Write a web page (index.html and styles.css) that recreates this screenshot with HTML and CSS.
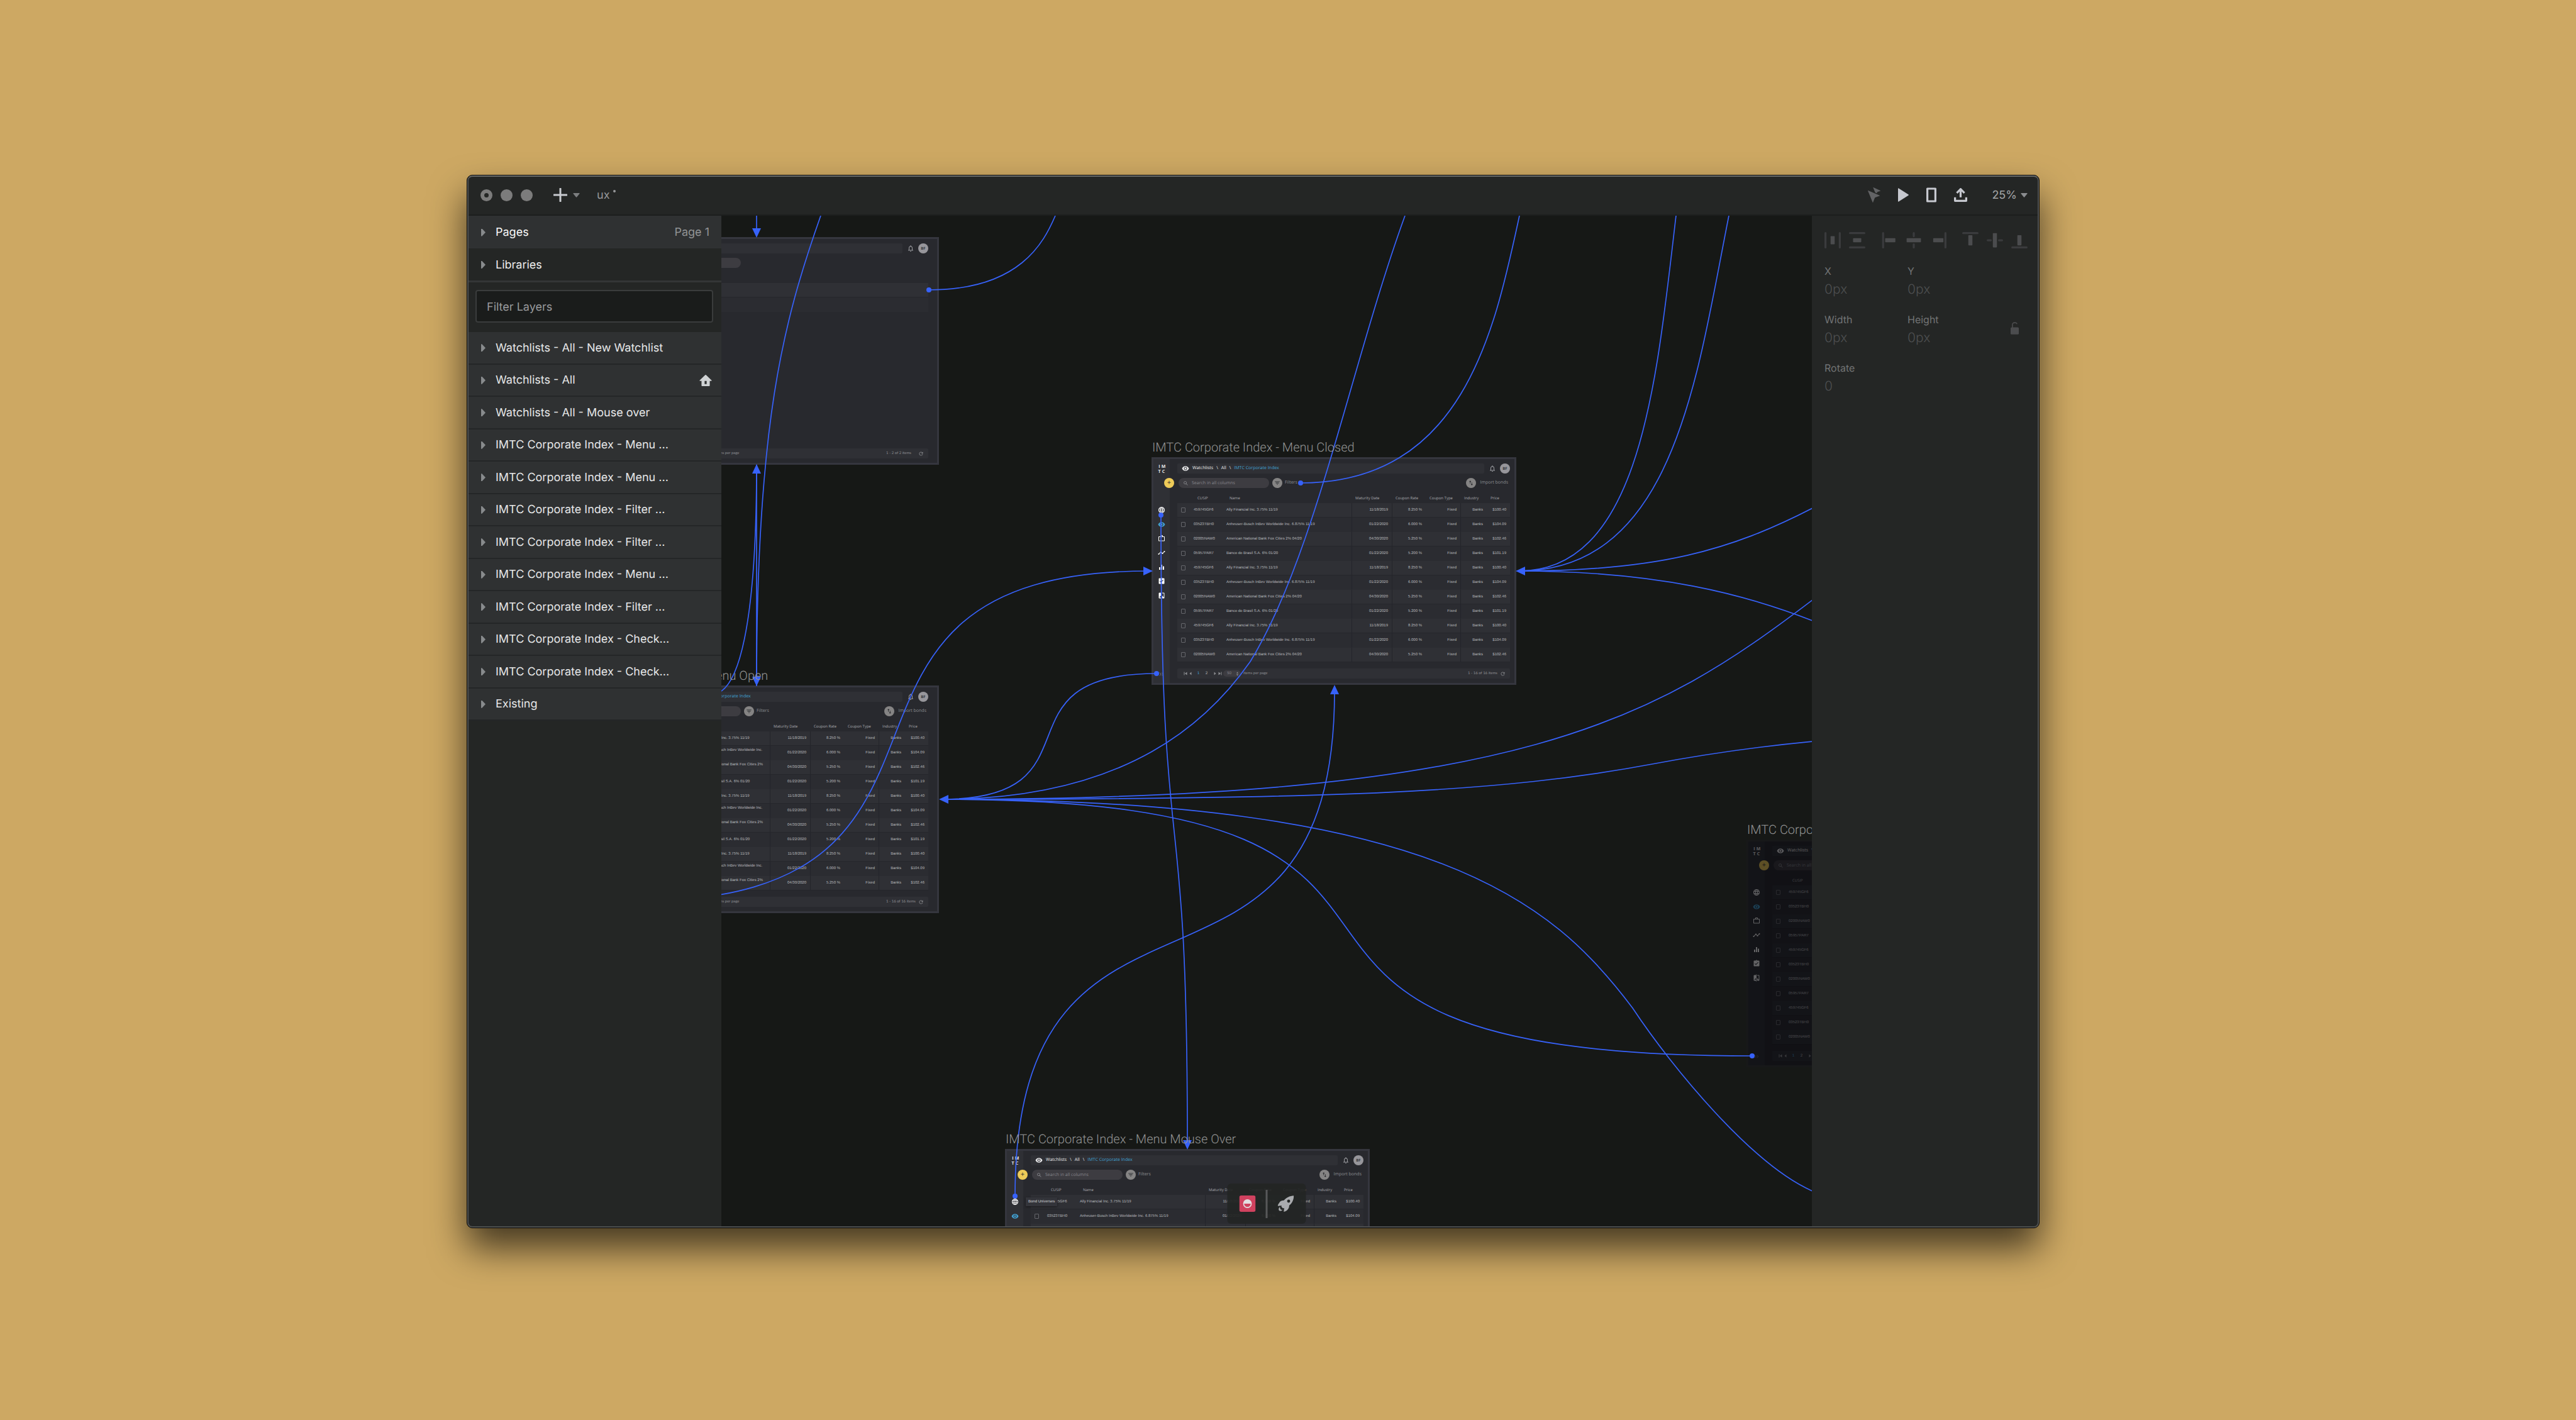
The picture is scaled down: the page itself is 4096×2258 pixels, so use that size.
FILE: index.html
```html
<!DOCTYPE html>
<html lang="en">
<head>
<meta charset="utf-8">
<meta name="viewport" content="width=device-width, initial-scale=1">
<title>ux</title>
<link rel="stylesheet" href="styles.css">
</head>
<body>
<svg class="sprite" aria-hidden="true">
  <symbol id="i-globe" viewBox="0 0 24 24"><path d="M11.99 2C6.47 2 2 6.48 2 12s4.47 10 9.99 10C17.52 22 22 17.52 22 12S17.52 2 11.99 2zm6.93 6h-2.95c-.32-1.25-.78-2.45-1.38-3.56 1.84.63 3.37 1.91 4.33 3.56zM12 4.04c.83 1.2 1.48 2.53 1.91 3.96h-3.82c.43-1.43 1.08-2.76 1.91-3.96zM4.26 14C4.1 13.36 4 12.69 4 12s.1-1.36.26-2h3.38c-.08.66-.14 1.32-.14 2 0 .68.06 1.34.14 2H4.26zm.82 2h2.95c.32 1.25.78 2.45 1.38 3.56-1.84-.63-3.37-1.9-4.33-3.56zm2.95-8H5.08c.96-1.66 2.49-2.93 4.33-3.56C8.81 5.55 8.35 6.75 8.03 8zM12 19.96c-.83-1.2-1.48-2.53-1.91-3.96h3.82c-.43 1.43-1.08 2.76-1.91 3.96zM14.34 14H9.66c-.09-.66-.16-1.32-.16-2 0-.68.07-1.35.16-2h4.68c.09.65.16 1.32.16 2 0 .68-.07 1.34-.16 2zm.25 5.56c.6-1.11 1.06-2.31 1.38-3.56h2.95c-.96 1.65-2.49 2.93-4.33 3.56zM16.36 14c.08-.66.14-1.32.14-2 0-.68-.06-1.34-.14-2h3.38c.16.64.26 1.31.26 2s-.1 1.36-.26 2h-3.38z"/></symbol>
  <symbol id="i-eye" viewBox="0 0 24 24"><path d="M12 4.5C7 4.5 2.73 7.61 1 12c1.73 4.39 6 7.5 11 7.5s9.27-3.11 11-7.5c-1.73-4.39-6-7.5-11-7.5zM12 17c-2.76 0-5-2.24-5-5s2.24-5 5-5 5 2.24 5 5-2.24 5-5 5zm0-8c-1.66 0-3 1.34-3 3s1.34 3 3 3 3-1.34 3-3-1.34-3-3-3z"/></symbol>
  <symbol id="i-work" viewBox="0 0 24 24"><path d="M14 6V4h-4v2h4zM4 8v11h16V8H4zm16-2c1.11 0 2 .89 2 2v11c0 1.11-.89 2-2 2H4c-1.11 0-2-.89-2-2l.01-11c0-1.11.88-2 1.99-2h4V4c0-1.11.89-2 2-2h4c1.11 0 2 .89 2 2v2h4z"/></symbol>
  <symbol id="i-timeline" viewBox="0 0 24 24"><path d="M23 8c0 1.1-.9 2-2 2-.18 0-.35-.02-.51-.07l-3.56 3.55c.05.16.07.34.07.52 0 1.1-.9 2-2 2s-2-.9-2-2c0-.18.02-.36.07-.52l-2.55-2.55c-.16.05-.34.07-.52.07s-.36-.02-.52-.07l-4.55 4.56c.05.16.07.33.07.51 0 1.1-.9 2-2 2s-2-.9-2-2 .9-2 2-2c.18 0 .35.02.51.07l4.56-4.55C8.02 9.36 8 9.18 8 9c0-1.1.9-2 2-2s2 .9 2 2c0 .18-.02.36-.07.52l2.55 2.55c.16-.05.34-.07.52-.07s.36.02.52.07l3.55-3.56C19.02 8.35 19 8.18 19 8c0-1.1.9-2 2-2s2 .9 2 2z"/></symbol>
  <symbol id="i-bars" viewBox="0 0 24 24"><path d="M10 20h4V4h-4v16zm-6 0h4v-8H4v8zM16 9v11h4V9h-4z"/></symbol>
  <symbol id="i-task" viewBox="0 0 24 24"><path d="M19 3h-4.180C14.400 1.840 13.300 1 12 1c-1.300 0-2.400.84-2.820 2H5c-1.100 0-2 .9-2 2v14c0 1.100.9 2 2 2h14c1.100 0 2-.9 2-2V5c0-1.100-.9-2-2-2zm-7 0c.55 0 1 .45 1 1s-.45 1-1 1-1-.45-1-1 .45-1 1-1zm-2 14l-4-4 1.410-1.410L10 14.170l6.590-6.590L18 9l-8 8z"/></symbol>
  <symbol id="i-compare" viewBox="0 0 24 24"><path d="M10 3H5c-1.100 0-2 .9-2 2v14c0 1.100.9 2 2 2h5v2h2V1h-2v2zm0 15H5l5-6v6zm9-15h-5v2h5v13l-5-6v9h5c1.100 0 2-.9 2-2V5c0-1.100-.9-2-2-2z"/></symbol>
  <symbol id="i-bell" viewBox="0 0 24 24"><path d="M12 22c1.100 0 2-.9 2-2h-4c0 1.100.9 2 2 2zm6-6v-5c0-3.070-1.630-5.640-4.500-6.320V4c0-.83-.67-1.500-1.500-1.500s-1.500.67-1.500 1.500v.68C7.640 5.360 6 7.920 6 11v5l-2 2v1h16v-1l-2-2zm-2 1H8v-6c0-2.480 1.510-4.500 4-4.500s4 2.020 4 4.500v6z"/></symbol>
  <symbol id="i-search" viewBox="0 0 24 24"><path d="M15.500 14h-.79l-.28-.27C15.410 12.590 16 11.110 16 9.500 16 5.910 13.090 3 9.500 3S3 5.910 3 9.500 5.910 16 9.500 16c1.610 0 3.090-.59 4.230-1.570l.27.28v.79l5 4.990L20.490 19l-4.990-5zm-6 0C7.010 14 5 11.990 5 9.500S7.010 5 9.500 5 14 7.010 14 9.500 11.990 14 9.500 14z"/></symbol>
  <symbol id="i-filter" viewBox="0 0 24 24"><path d="M10 18h4v-2h-4v2zM3 6v2h18V6H3zm3 7h12v-2H6v2z"/></symbol>
  <symbol id="i-swap" viewBox="0 0 24 24"><path d="M16 17.010V10h-2v7.010h-3L15 21l4-3.990h-3zM9 3L5 6.990h3V14h2V6.990h3L9 3z"/></symbol>
  <symbol id="i-refresh" viewBox="0 0 24 24"><path d="M17.650 6.350C16.200 4.900 14.210 4 12 4c-4.420 0-7.990 3.580-7.990 8s3.570 8 7.990 8c3.730 0 6.840-2.550 7.730-6h-2.080c-.82 2.330-3.040 4-5.650 4-3.310 0-6-2.690-6-6s2.690-6 6-6c1.660 0 3.140.69 4.220 1.780L13 11h7V4l-2.350 2.350z"/></symbol>
  <symbol id="i-expand" viewBox="0 0 24 24"><path d="M3 5l7 7-7 7M13 5l7 7-7 7" fill="none" stroke="currentColor" stroke-width="2.4"/></symbol>
  <symbol id="i-first" viewBox="0 0 12 12"><path d="M1 1h2v10H1zM11 1v10L4 6z"/></symbol>
  <symbol id="i-prev" viewBox="0 0 12 12"><path d="M9 1v10L3 6z"/></symbol>
  <symbol id="i-next" viewBox="0 0 12 12"><path d="M3 1v10l6-5z"/></symbol>
  <symbol id="i-last" viewBox="0 0 12 12"><path d="M9 1h2v10H9zM1 1v10l7-5z"/></symbol>
  <symbol id="i-updown" viewBox="0 0 12 16"><path d="M2 6l4-5 4 5zM2 10l4 5 4-5z"/></symbol>
</svg>

<div class="app">
  <header class="titlebar">
    <div class="lights">
      <button class="light light--close" aria-label="Close"></button>
      <button class="light" aria-label="Minimize"></button>
      <button class="light" aria-label="Zoom"></button>
    </div>
    <button class="insert" aria-label="Insert">
      <svg width="22" height="22" viewBox="0 0 22 22"><path d="M11 1v20M1 11h20" stroke="#c8cacf" stroke-width="3" stroke-linecap="round"/></svg>
      <svg width="11" height="7" viewBox="0 0 11 7"><path d="M1 0h9q1 0 .5 1L6 6.500q-.5.5-1 0L.5 1Q0 0 1 0z" fill="#7c7e80"/></svg>
    </button>
    <div class="doc-name">ux<span class="doc-name__dot"></span></div>
    <div class="tools">
      <button class="tool" aria-label="Live cursor">
        <svg width="20" height="24" viewBox="0 0 25 30"><path d="M0 6.500Q0 6 .7 6.300L23.300 16q.7.500 0 .8l-8.600 3.200q-.7.300-.9 1L10.300 29.600q-.4.700-.8 0z" fill="#626365"/><path d="M10.500.4Q10.400-.2 11 .1L24.600 6.400q.8.500 0 .8L19.500 8.800q-.8.200-.9 1l-.8 1.800-3.200-1.300z" fill="#626365"/></svg>
      </button>
      <button class="tool" aria-label="Preview">
        <svg width="17" height="22" viewBox="0 0 21 27"><path d="M0 1.200Q0-.3 1.300.5L20.300 12.700q1 .8 0 1.600L1.300 26.500Q0 27.300 0 25.800z" fill="#c6c8cf"/></svg>
      </button>
      <button class="tool" aria-label="Device">
        <svg width="16" height="24" viewBox="0 0 20 30"><rect x="2" y="2.500" width="16" height="25" fill="none" stroke="#c6c8cf" stroke-width="4" stroke-linejoin="round"/></svg>
      </button>
      <button class="tool" aria-label="Share">
        <svg width="21" height="22" viewBox="0 0 26 27"><path d="M13 18V3M5.500 9.500L13 2l7.500 7.500" fill="none" stroke="#c6c8cf" stroke-width="4"/><path d="M2 18v7h22v-7" fill="none" stroke="#c6c8cf" stroke-width="4" stroke-linejoin="round"/></svg>
      </button>
      <button class="zoom">25%
        <svg width="11" height="7" viewBox="0 0 11 7"><path d="M1 0h9q1 0 .5 1L6 6.500q-.5.5-1 0L.5 1Q0 0 1 0z" fill="#8a8c8f"/></svg>
      </button>
    </div>
  </header>

  <div class="workspace">
    <aside class="layers">
      <div class="section section--pages"><i class="caret"></i>Pages<span class="section__note">Page 1</span></div>
      <div class="section"><i class="caret"></i>Libraries</div>
      <div class="filter"><input class="filter__input" type="text" placeholder="Filter Layers" aria-label="Filter Layers"></div>
      <ul class="layer-list">
        <li class="layer"><i class="caret"></i>Watchlists - All - New Watchlist</li>
        <li class="layer"><i class="caret"></i>Watchlists - All
          <svg class="layer__home" width="20" height="18" viewBox="0 0 24 22"><path d="M11.200.4q.8-.7 1.600 0L23.600 10.800q.6.900-.5 1.100H20v9q0 1.100-1.100 1.100H5.100Q4 22 4 20.900v-9H.9q-1.100-.2-.5-1.100zM10 12v6h4v-6z" fill="#cfd2d4" fill-rule="evenodd"/></svg>
        </li>
        <li class="layer"><i class="caret"></i>Watchlists - All - Mouse over</li>
        <li class="layer"><i class="caret"></i>IMTC Corporate Index - Menu ...</li>
        <li class="layer"><i class="caret"></i>IMTC Corporate Index - Menu ...</li>
        <li class="layer"><i class="caret"></i>IMTC Corporate Index - Filter ...</li>
        <li class="layer"><i class="caret"></i>IMTC Corporate Index - Filter ...</li>
        <li class="layer"><i class="caret"></i>IMTC Corporate Index - Menu ...</li>
        <li class="layer"><i class="caret"></i>IMTC Corporate Index - Filter ...</li>
        <li class="layer"><i class="caret"></i>IMTC Corporate Index - Check...</li>
        <li class="layer"><i class="caret"></i>IMTC Corporate Index - Check...</li>
        <li class="layer"><i class="caret"></i>Existing</li>
      </ul>
    </aside>

    <main class="canvas">
      <div id="artboards"></div>
      <svg class="links" aria-hidden="true">
        <defs>
          <path id="tip" d="M0 0L-7 -15H7z"/>
        </defs>
        <g class="links__lines">
          <path d="M56 0V24M56 406V738"/>
          <path d="M56 396C56 640 30 735 0 756"/>
          <path d="M56 748C56 330 98 170 158 0"/>
          <path d="M330 118C475 118 513 42 531 0"/>
          <path d="M350 928C650 928 778 799 841 709C945 539 1000 240 1087 0"/>
          <path d="M921 425C1181 425 1230 180 1269 0"/>
          <path d="M680 565C75 565 477 1090 -134 1090"/>
          <path d="M692 728C426 728 612 928 350 928"/>
          <path d="M1268 565C1463 565 1487 260 1518 0"/>
          <path d="M1268 565C1517 565 1552 250 1602 0"/>
          <path d="M1268 565C1489 565 1605 532 1735 465"/>
          <path d="M1268 565C1491 565 1630 603 1735 644"/>
          <path d="M975 756C975 1332 467 973 467 1559"/>
          <path d="M699 476C699 1085 741 876 741 1474"/>
          <path d="M350 928C1274 928 1485 801 1735 611"/>
          <path d="M350 928C978 928 1240 917 1480 872C1560 857 1640 845 1735 836"/>
          <path d="M350 928C1345 928 641 1336 1640 1336"/>
          <path d="M350 928C1133 928 1322 1090 1449 1260C1512 1355 1640 1510 1735 1551"/>
        </g>
        <g class="links__ends">
          <use href="#tip" transform="translate(56 35)"/>
          <use href="#tip" transform="translate(56 395) rotate(180)"/>
          <use href="#tip" transform="translate(56 748)"/>
          <use href="#tip" transform="translate(686 565) rotate(-90)"/>
          <use href="#tip" transform="translate(1263 565) rotate(90)"/>
          <use href="#tip" transform="translate(975 746) rotate(180)"/>
          <use href="#tip" transform="translate(346 928) rotate(90)"/>
          <use href="#tip" transform="translate(741 1485)"/>
          <circle cx="330" cy="118" r="4"/>
          <circle cx="921" cy="425" r="4"/>
          <circle cx="699" cy="476" r="4"/>
          <circle cx="692" cy="728" r="4"/>
          <circle cx="467" cy="1559" r="4"/>
          <circle cx="1639" cy="1336" r="4"/>
        </g>
      </svg>
      <div class="dock">
        <button class="dock__btn" aria-label="Components">
          <svg width="26" height="26" viewBox="0 0 32 32"><rect width="32" height="32" rx="4" fill="#d0425f"/><circle cx="16" cy="16" r="8.500" fill="#e3dfe1"/><path d="M9.500 16h13a6.500 6.500 0 0 1-13 0z" fill="#d0425f"/></svg>
        </button>
        <span class="dock__rule"></span>
        <button class="dock__btn" aria-label="Launch">
          <svg width="26" height="26" viewBox="0 0 32 32"><path d="M31.600.2C24 .6 17 3.800 12.300 9.600 9 9.700 5.600 10.600 3.200 14 1.800 16 .6 18.400.2 20.500L8 19.800c-.5.800-.7 1.600-.6 2.400L10.300 25c.8 0 1.700-.3 2.500-.8L12 32c2.400-.7 4.800-1.900 6.700-3.500 3-2.600 4-5.600 4-9C28.400 15 31.700 8.400 31.600.2zM21.500 14a3 3 0 1 1 .1-6 3 3 0 0 1-.1 6z" fill="#a9abae"/><path d="M4.600 22.600C1.800 24 1.600 28 3 29.600c2 1.300 5.600.8 6.600-1.900-1.200.4-2.600.6-3.600-.4-1-1.200-1.400-2.600-1.400-4.700z" fill="#a9abae"/></svg>
        </button>
      </div>
    </main>

    <aside class="inspector">
      <div class="align">
        <div class="align__group">
          <button class="align__btn" aria-label="Distribute horizontally"><svg viewBox="0 0 32 32"><path class="guide" d="M2 2v28M30 2v28"/><rect x="12" y="8" width="8" height="16" rx="1"/></svg></button>
          <button class="align__btn" aria-label="Distribute vertically"><svg viewBox="0 0 32 32"><path class="guide" d="M2 2h28M2 30h28"/><rect x="8" y="12" width="16" height="8" rx="1"/></svg></button>
        </div>
        <div class="align__group">
          <button class="align__btn" aria-label="Align left"><svg viewBox="0 0 32 32"><path class="guide" d="M4 2v28"/><rect x="8" y="12" width="20" height="8" rx="1"/></svg></button>
          <button class="align__btn" aria-label="Align center"><svg viewBox="0 0 32 32"><path class="guide" d="M16 2v6M16 24v6"/><rect x="2" y="12" width="28" height="8" rx="1"/></svg></button>
          <button class="align__btn" aria-label="Align right"><svg viewBox="0 0 32 32"><path class="guide" d="M30 2v28"/><rect x="6" y="12" width="20" height="8" rx="1"/></svg></button>
        </div>
        <div class="align__group">
          <button class="align__btn" aria-label="Align top"><svg viewBox="0 0 32 32"><path class="guide" d="M2 2h28"/><rect x="12" y="6" width="8" height="20" rx="1"/></svg></button>
          <button class="align__btn" aria-label="Align middle"><svg viewBox="0 0 32 32"><path class="guide" d="M2 16h6M24 16h6"/><rect x="12" y="2" width="8" height="28" rx="1"/></svg></button>
          <button class="align__btn" aria-label="Align bottom"><svg viewBox="0 0 32 32"><path class="guide" d="M2 30h28"/><rect x="12" y="6" width="8" height="20" rx="1"/></svg></button>
        </div>
      </div>
      <form class="fields">
        <div class="field"><label for="x">X</label><input id="x" value="0px"></div>
        <div class="field"><label for="y">Y</label><input id="y" value="0px"></div>
        <div class="field field--first"><label for="w">Width</label><input id="w" value="0px"></div>
        <div class="field"><label for="h">Height</label><input id="h" value="0px"></div>
        <button class="lock" type="button" aria-label="Lock ratio"><svg width="13" height="20" viewBox="0 0 16 24"><path d="M3.500 11V5a4 4 0 0 1 4-4h1.500a4 4 0 0 1 3.600 2.600" fill="none" stroke="#4b4c4e" stroke-width="2"/><rect y="10" width="16" height="14" rx="2" fill="#4b4c4e"/></svg></button>
        <div class="field field--first"><label for="r">Rotate</label><input id="r" value="0"></div>
      </form>
    </aside>
  </div>
</div>
<script src="artboards.js"></script>
</body>
</html>
```
FILE: styles.css
```css
* { box-sizing: border-box; }

body {
  margin: 0;
  min-height: 100vh;
  display: flex;
  padding: 278px 853px 305px 742px;
  background: #cda863;
  color: #e6e7e8;
  font-family: Inter, "Liberation Sans", sans-serif;
  font-size: 18px;
  text-rendering: geometricPrecision;
}

button, input, select {
  margin: 0;
  padding: 0;
  border: 0;
  background: none;
  color: inherit;
  font: inherit;
  text-rendering: inherit;
}

button { display: flex; align-items: center; justify-content: center; }
svg { display: block; }
.sprite { position: absolute; width: 0; height: 0; }

/* window */
.app {
  position: relative;
  flex: 1;
  min-width: 0;
  display: flex;
  flex-direction: column;
  overflow: hidden;
  border: 1px solid #060606;
  border-radius: 9px;
  background: #242625;
  box-shadow: 0 32px 57px rgba(0, 0, 0, .66);
}
.app::after {
  content: "";
  position: absolute;
  inset: 0;
  z-index: 10;
  border: 2px solid #4f5151;
  border-top-color: #686a6a;
  border-radius: 8px;
  pointer-events: none;
}

/* title bar */
.titlebar {
  display: flex;
  align-items: center;
  height: 64px;
  padding: 0 18px 0 21px;
  border-bottom: 2px solid #1c1e1d;
}
.lights { display: flex; gap: 13px; }
.light { width: 19px; height: 19px; border-radius: 50%; background: #7c7c7c; }
.light--close::after { content: ""; width: 7px; height: 7px; border-radius: 50%; background: #242625; }
.insert { gap: 9px; margin-left: 33px; }
.doc-name { display: flex; margin-left: 27px; color: #96989a; }
.doc-name__dot { width: 4px; height: 4px; margin: 2px 0 0 6px; border-radius: 50%; background: #96989a; }
.tools { display: flex; align-items: center; gap: 28px; margin-left: auto; }
.zoom { gap: 6px; margin-left: 11px; color: #a3a5a7; }

.workspace { flex: 1; display: flex; min-height: 0; }

/* layers */
.layers { flex: none; width: 404px; background: #242625; }
.section, .layer {
  display: flex;
  align-items: center;
  padding: 1px 17px 0 22px;
}
.section { height: 51px; color: #ededee; }
.section--pages { height: 52px; background: #2f3132; color: #f8f8f8; }
.section__note { margin-left: auto; padding-right: 2px; color: #929496; }
.caret {
  flex: none;
  width: 7px;
  height: 12px;
  margin-right: 16px;
  background: #888b8d;
  clip-path: polygon(0 0, 20% 0, 100% 50%, 20% 100%, 0 100%);
}
.filter { padding: 12px 13px 15px; border-top: 3px solid #343636; }
.filter__input {
  display: block;
  width: 100%;
  height: 52px;
  padding: 2px 16px 0;
  border: 2px solid #3a3c3c;
  border-radius: 4px;
  background: #1a1c1b;
}
.filter__input::placeholder { color: #98999b; opacity: 1; }
.layer-list {
  display: grid;
  grid-auto-rows: 1fr;
  height: 618px;
  margin: 0;
  padding: 0;
  list-style: none;
}
.layer { background: #2f3132; border-bottom: 2px solid #242627; }
.layer__home { margin-left: auto; margin-right: -2px; }

/* canvas */
.canvas { position: relative; flex: 1; min-width: 0; overflow: hidden; background: #161816; }
.links { position: absolute; inset: 0; z-index: 2; width: 100%; height: 100%; pointer-events: none; }
.links__lines { fill: none; stroke: #3762fa; stroke-width: 1.7; }
.links__ends { fill: #3762fa; }

.artboard { position: absolute; width: 580px; height: 362px; font-family: "Open Sans", "Liberation Sans", sans-serif; }
.artboard__title {
  position: absolute;
  z-index: 3;
  left: 1px;
  bottom: 100%;
  margin: 0;
  padding-bottom: 4px;
  color: #929393;
  font: 300 20px/24px Roboto, "Liberation Sans", sans-serif;
  white-space: nowrap;
}
.screen {
  position: relative;
  display: flex;
  height: 100%;
  border: 3px solid #35363e;
  background: #28292e;
  color: #9a9b9f;
  font-size: 7px;
  line-height: 10px;
}
.screen svg { fill: currentColor; }
.menu {
  flex: none;
  display: flex;
  flex-direction: column;
  align-items: center;
  width: 26px;
  padding: 9px 0 10px;
  background: #2f3035;
  color: #fff;
}
.menu__logo {
  display: grid;
  grid-template-columns: 5px 6px;
  gap: 0 1px;
  justify-items: center;
  line-height: 8px;
  font-weight: 700;
  color: #e8e8ea;
}
.menu__items { display: flex; flex-direction: column; justify-content: space-between; height: 148px; margin-top: 50px; }
.menu__items svg { width: 12px; height: 12px; }
.menu__items .on { color: #41a1d3; }
.menu__more { margin-top: auto; width: 8px; height: 8px; color: #8d8e92; }
.add {
  position: absolute;
  left: 17px;
  top: 30px;
  width: 16px;
  height: 16px;
  border-radius: 50%;
  background: #eecb58;
  color: #28292e;
  font-size: 11px;
}
.page { flex: 1; min-width: 0; display: flex; flex-direction: column; padding: 7px 7px 7px 12px; }
.bar { display: flex; align-items: center; gap: 8px; height: 16px; }
.crumbs {
  flex: 1;
  display: flex;
  align-items: center;
  gap: 5px;
  height: 16px;
  padding-left: 7px;
  border-radius: 2px;
  background: #2f3035;
  color: #e8e8ea;
}
.crumbs svg { width: 12px; height: 12px; }
.crumbs a { color: #41a1d3; text-decoration: none; }
.bell { width: 9px; height: 12px; }
.bell svg { width: 12px; height: 12px; flex: none; }
.avatar { width: 16px; height: 16px; border-radius: 50%; background: #97969b; color: #35363b; font-size: 6px; font-weight: 700; }
.actions { display: flex; align-items: center; height: 16px; margin: 7px 3px 0 2px; color: #8d8e92; }
.find { display: flex; align-items: center; gap: 5px; width: 144px; height: 16px; padding-left: 7px; border-radius: 8px; background: #3d3c41; }
.find svg { width: 9px; height: 9px; }
.find input { width: 110px; height: 12px; }
.find input::placeholder { color: #85858a; opacity: 1; }
.round { display: grid; place-items: center; width: 16px; height: 16px; border-radius: 50%; background: #858484; color: #1f2024; }
.round svg { width: 10px; height: 10px; }
.actions button { gap: 4px; margin-left: 5px; }
.actions .import { gap: 6px; margin-left: auto; }
.grid { width: 100%; margin-top: 8px; border-collapse: separate; border-spacing: 0; table-layout: fixed; font-size: 6px; line-height: 8px; }
.grid th { height: 16px; padding: 0 0 0 6px; text-align: left; font-weight: 400; color: #a9aaae; white-space: nowrap; }
.grid th:nth-child(3) { padding-left: 5px; }
.grid td { height: 23px; padding: 0 6px 0 0; text-align: right; color: #b9babd; border-bottom: 1px solid; font-family: "Liberation Sans", sans-serif; white-space: nowrap; }
.grid tr:nth-child(odd) td { background: #2f3035; border-bottom-color: #25262b; }
.grid tr:nth-child(even) td { background: #2b2c31; border-bottom-color: #2b2c31; }
.grid td:nth-child(-n+3) { padding: 0; text-align: left; }
.grid td:nth-child(4), .grid td:nth-child(5), .grid td:nth-child(7) { border-left: 1px solid #23242a; }
.artboard--open .grid td:nth-child(3) { white-space: normal; padding-right: 4px; }
.grid input { display: block; appearance: none; width: 7px; height: 8px; margin-left: 6px; border: 1px solid #66676c; border-radius: 1px; }
.blank-rows { margin-top: 24px; }
.blank-rows div { height: 23px; background: #2b2c31; }
.blank-rows div:first-child { background: #2f3035; border-bottom: 1px solid #25262b; }
.pager { display: flex; align-items: center; height: 16px; margin-top: auto; padding: 0 7px 0 9px; border-radius: 2px; background: #2f3035; color: #8d8e92; font-family: Lato, "Liberation Sans", sans-serif; font-size: 6px; }
.pager button { width: 7px; margin-right: 1px; }
.pager svg { width: 6px; height: 6px; }
.pager a { width: 5px; margin-left: 8px; color: #b9babd; text-align: center; text-decoration: none; }
.pager a.on { margin-left: 6px; color: #41a1d3; }
.pager a + button { margin-left: 7px; }
.pager__size { display: flex; align-items: center; gap: 4px; width: 28px; height: 10px; margin: 0 4px 0 1px; padding-left: 6px; border-radius: 5px; background: #3d3c41; }
.pager__size select { appearance: none; width: 10px; height: 10px; color: #85858a; line-height: 10px; }
.pager__size svg { width: 5px; height: 7px; }
.pager__count { width: 44px; margin-left: auto; margin-right: 7px; white-space: nowrap; }
.pager .reload, .pager .reload svg { width: 9px; height: 9px; margin: 0; }

/* screens with the side menu unfolded */
.artboard--open .menu { width: 104px; align-items: flex-start; padding-left: 7px; }
.artboard--open .page { padding-right: 14px; }

/* covered by a dialog scrim */
.artboard--dim .screen { border-color: #171819; }
.artboard--dim .screen::after { content: ""; position: absolute; inset: 0; background: rgba(4, 4, 6, .62); }

.tip {
  position: absolute;
  left: 30px;
  top: 74px;
  padding: 2px 4px;
  background: #33343a;
  box-shadow: 0 1px 3px rgba(0, 0, 0, .5);
  color: #d6d6d8;
  font: 6px/10px "Liberation Sans", sans-serif;
  white-space: nowrap;
}

/* floating dock */
.dock {
  position: absolute;
  left: 50%;
  bottom: 6px;
  z-index: 4;
  display: flex;
  align-items: center;
  gap: 16px;
  height: 64px;
  padding: 0 19px;
  border-radius: 6px;
  background: rgba(35, 37, 36, .94);
  transform: translateX(-50%);
}
.dock__rule { width: 3px; height: 45px; background: #58595a; }

/* inspector */
.inspector { flex: none; width: 361px; padding: 26px 0 0 20px; background: #242625; }
.align { display: flex; gap: 25px; }
.align__group { display: flex; gap: 13px; }
.align__btn svg { width: 26px; height: 26px; fill: #4b4c4e; }
.guide { fill: none; stroke: #3a3b3d; stroke-width: 4; stroke-linecap: round; }
.fields {
  display: grid;
  grid-template-columns: 132px 132px 77px;
  gap: 21px 0;
  margin-top: 22px;
  font-size: 16px;
  line-height: 28px;
}
.field { display: flex; flex-direction: column; color: #717374; }
.field--first { grid-column: 1; }
.field input { width: 100px; height: 30px; margin-bottom: -2px; color: #4d4f50; font-size: 21px; font-weight: 300; }
.lock { align-self: center; justify-self: start; padding-left: 32px; }
```
FILE: artboards.js
```js
const icon = (name, cls = '') => `<svg class="${cls}"><use href="#i-${name}"/></svg>`;

const bonds = [
  ['459745GF6', 'Ally Financial Inc. 3.75% 11/19', '11/18/2019', '8.250 %', '$100.40'],
  ['03523TBH0', 'Anheuser-Busch InBev Worldwide Inc. 6.875% 11/19', '01/22/2020', '6.000 %', '$104.09'],
  ['02005NAW0', 'American National Bank Fox Cities 2% 04/20', '04/30/2020', '5.250 %', '$102.46'],
  ['05957PAR7', 'Banco do Brasil S.A. 6% 01/20', '01/22/2020', '5.200 %', '$101.19'],
];

const screens = [
  { x: -234, y: 34, title: 'Watchlists - All', kind: 'open', blank: true, count: '1 - 2 of 2 items' },
  { x: -234, y: 747, title: 'IMTC Corporate Index - Menu Open', kind: 'open' },
  { x: 684, y: 384, title: 'IMTC Corporate Index - Menu Closed' },
  { x: 451, y: 1484, title: 'IMTC Corporate Index - Menu Mouse Over', tip: 'Bond Universes' },
  { x: 1630, y: 992, title: 'IMTC Corporate Index - Filter', kind: 'dim' },
];

function table() {
  const rows = Array.from({ length: 11 }, (_, i) => {
    const [cusip, name, date, rate, price] = bonds[i % 4];
    return `<tr><td><input type="checkbox" aria-label="Select ${cusip}"></td><td>${cusip}</td><td>${name}</td>
      <td>${date}</td><td>${rate}</td><td>Fixed</td><td>Banks</td><td>${price}</td></tr>`;
  }).join('');
  const widths = [26, 52, 0, 64, 54, 55, 42, 37];
  const cols = widths.map(w => (w ? `<col style="width:${w}px">` : '<col>')).join('');
  return `<table class="grid"><colgroup>${cols}</colgroup>
    <thead><tr><th></th><th>CUSIP</th><th>Name</th><th>Maturity Date</th><th>Coupon Rate</th><th>Coupon Type</th><th>Industry</th><th>Price</th></tr></thead>
    <tbody>${rows}</tbody></table>`;
}

const bondActions = `
  <button><i class="round">${icon('filter')}</i>Filters</button>
  <button class="import"><i class="round">${icon('swap')}</i>Import bonds</button>`;

function screen(s) {
  const icons = ['globe', 'eye', 'work', 'timeline', 'bars', 'task', 'compare'];
  return `<section class="artboard artboard--${s.kind || 'closed'}" style="left:${s.x}px;top:${s.y}px">
    <h2 class="artboard__title">${s.title}</h2>
    <div class="screen">
      <nav class="menu">
        <div class="menu__logo"><span>I</span><span>M</span><span>T</span><span>C</span></div>
        <div class="menu__items">${icons.map(n => icon(n, n === 'eye' ? 'on' : '')).join('')}</div>
        ${icon('expand', 'menu__more')}
      </nav>
      <div class="page">
        <div class="bar">
          <div class="crumbs">${icon('eye')}<span>Watchlists</span><span>\\</span><span>All</span>
            ${s.blank ? '' : '<span>\\</span><a href="#">IMTC Corporate Index</a>'}</div>
          <button class="bell" aria-label="Notifications">${icon('bell')}</button>
          <button class="avatar">BF</button>
        </div>
        <div class="actions">
          <label class="find">${icon('search')}<input type="text" placeholder="Search in all columns" aria-label="Search in all columns"></label>
          ${s.blank ? '' : bondActions}
        </div>
        ${s.blank ? '<div class="blank-rows"><div></div><div></div></div>' : table()}
        <div class="pager">
          <button aria-label="First">${icon('first')}</button><button aria-label="Previous">${icon('prev')}</button>
          <a href="#" class="on">1</a><a href="#">2</a>
          <button aria-label="Next">${icon('next')}</button><button aria-label="Last">${icon('last')}</button>
          <span class="pager__size"><select aria-label="Items per page"><option>50</option></select>${icon('updown')}</span>
          <span>items per page</span>
          <span class="pager__count">${s.count || '1 - 16 of 16 items'}</span>
          <button class="reload" aria-label="Reload">${icon('refresh')}</button>
        </div>
      </div>
      <button class="add" aria-label="Add">+</button>
      ${s.tip ? `<div class="tip">${s.tip}</div>` : ''}
    </div>
  </section>`;
}

document.getElementById('artboards').innerHTML = screens.map(screen).join('');
```
